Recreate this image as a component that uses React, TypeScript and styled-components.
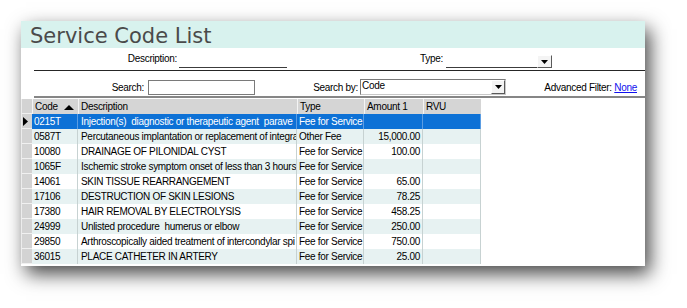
import React from 'react';
import styled, { createGlobalStyle } from 'styled-components';

const GlobalStyle = createGlobalStyle`
  html, body { margin: 0; padding: 0; background: #ffffff; }
  body { font-family: "Liberation Sans", Arial, sans-serif; }
`;

const Page = styled.div`
  width: 687px;
  height: 308px;
  box-sizing: border-box;
  padding: 21px 0 0 21px;
  overflow: hidden;
`;

const Window = styled.div`
  width: 624px;
  height: 245px;
  background: #ffffff;
  overflow: hidden;
  display: flex;
  flex-direction: column;
  box-shadow: 5px 8px 18px rgba(0, 0, 0, 0.72);
`;

const TitleBar = styled.div`
  height: 27px;
  box-sizing: border-box;
  padding: 4px 0 0 9px;
  background: #d8f2ee;
  font-family: "DejaVu Sans", Verdana, sans-serif;
  font-size: 21px;
  line-height: 23px;
  color: #4a4a4a;
`;

const FilterRow = styled.div<{ $top: number; $height: number }>`
  display: flex;
  align-items: flex-end;
  height: ${(p) => p.$height}px;
  margin-top: ${(p) => p.$top}px;
  font-size: 10px;
  letter-spacing: -0.3px;
  color: #000;
`;

const Label = styled.div<{ $width: number }>`
  width: ${(p) => p.$width}px;
  flex: none;
  text-align: right;
  line-height: 13px;
  white-space: nowrap;
  align-self: center;
`;

const LineField = styled.div<{ $width: number; $gap: number }>`
  width: ${(p) => p.$width}px;
  margin-left: ${(p) => p.$gap}px;
  height: 13px;
  box-sizing: border-box;
  border-bottom: 1px solid #3c3c3c;
  flex: none;
`;

const DropButton = styled.div`
  width: 15px;
  height: 13px;
  box-sizing: border-box;
  flex: none;
  background: #f4f4f4;
  border: 1px solid;
  border-color: #ffffff #5a5a5a #5a5a5a #ffffff;
  display: flex;
  align-items: center;
  justify-content: center;
`;

const TextInput = styled.div<{ $width: number; $gap: number }>`
  width: ${(p) => p.$width}px;
  margin-left: ${(p) => p.$gap}px;
  height: 15px;
  box-sizing: border-box;
  border: 1px solid #7a7a7a;
  background: #fff;
  flex: none;
`;

const Combo = styled.div<{ $width: number; $gap: number }>`
  width: ${(p) => p.$width}px;
  margin-left: ${(p) => p.$gap}px;
  height: 16px;
  box-sizing: border-box;
  border: 1px solid #7a7a7a;
  border-right-color: #c8c8c8;
  border-bottom-color: #c8c8c8;
  background: #fff;
  flex: none;
  display: flex;
  align-items: stretch;
`;

const ComboText = styled.div`
  flex: 1;
  padding-left: 1px;
  line-height: 12px;
`;

const ComboButton = styled(DropButton)`
  height: auto;
  width: 14px;
`;

const Spacer = styled.div`
  flex: 1;
`;

const FilterLink = styled.div`
  margin-right: 8px;
  align-self: center;
  line-height: 13px;
  white-space: nowrap;
  a {
    color: #1010ee;
    text-decoration: underline;
  }
`;

const Rule = styled.div<{ $top: number; $size: number; $color: string }>`
  margin: ${(p) => p.$top}px 0 0 13px;
  height: ${(p) => p.$size}px;
  background: ${(p) => p.$color};
  flex: none;
`;

const COLS = '11px 46px 219px 67px 59px 58px';

const Grid = styled.div`
  margin-top: 1px;
  width: 460px;
  font-size: 10px;
  letter-spacing: -0.3px;
  display: flex;
  flex-direction: column;
`;

const HeaderRow = styled.div`
  display: grid;
  grid-template-columns: ${COLS};
  height: 15px;
  background: #d5d5d5;
`;

const HeaderCell = styled.div`
  box-sizing: border-box;
  padding: 1px 0 0 2px;
  line-height: 14px;
  border-left: 1px solid #f4f4f4;
  white-space: nowrap;
  color: #000;
  display: flex;
  align-items: center;
  gap: 6px;
`;

const DataRow = styled.div<{ $alt: boolean; $selected: boolean }>`
  display: grid;
  grid-template-columns: ${COLS};
  height: 15px;
  background: ${(p) => (p.$selected ? '#0d71d6' : p.$alt ? '#e7f2f2' : '#ffffff')};
  color: ${(p) => (p.$selected ? '#ffffff' : '#000000')};
`;

const Selector = styled.div`
  background: #d3d3d3;
  box-sizing: border-box;
  border-bottom: 1px solid #f0f0f0;
  border-left: 1px solid #ececec;
  display: flex;
  align-items: center;
  padding-left: 1px;
`;

const Cell = styled.div<{ $right?: boolean; $selected: boolean }>`
  box-sizing: border-box;
  padding: 1px 2px 0 2px;
  line-height: 14px;
  white-space: pre;
  overflow: hidden;
  text-align: ${(p) => (p.$right ? 'right' : 'left')};
  border-right: 1px solid ${(p) => (p.$selected ? '#5b9de3' : '#c7d2d2')};
`;

const DescCell = styled(Cell)`
  padding-left: 3px;
`;

const Arrow = ({ dir }: { dir: 'down' | 'up' | 'right' }) => {
  if (dir === 'down')
    return (
      <svg width="7" height="4" viewBox="0 0 7 4">
        <path d="M0 0H7L3.5 4Z" fill="#000" />
      </svg>
    );
  if (dir === 'up')
    return (
      <svg width="10" height="5" viewBox="0 0 10 5">
        <path d="M0 5H10L5 0Z" fill="#000" />
      </svg>
    );
  return (
    <svg width="5" height="9" viewBox="0 0 5 9">
      <path d="M0 0V9L5 4.5Z" fill="#000" />
    </svg>
  );
};

type Row = { code: string; desc: string; type: string; amount: string };

const rows: Row[] = [
  { code: '0215T', desc: 'Injection(s)  diagnostic or therapeutic agent  parave', type: 'Fee for Service', amount: '' },
  { code: '0587T', desc: 'Percutaneous implantation or replacement of integra', type: 'Other Fee', amount: '15,000.00' },
  { code: '10080', desc: 'DRAINAGE OF PILONIDAL CYST', type: 'Fee for Service', amount: '100.00' },
  { code: '1065F', desc: 'Ischemic stroke symptom onset of less than 3 hours', type: 'Fee for Service', amount: '' },
  { code: '14061', desc: 'SKIN TISSUE REARRANGEMENT', type: 'Fee for Service', amount: '65.00' },
  { code: '17106', desc: 'DESTRUCTION OF SKIN LESIONS', type: 'Fee for Service', amount: '78.25' },
  { code: '17380', desc: 'HAIR REMOVAL BY ELECTROLYSIS', type: 'Fee for Service', amount: '458.25' },
  { code: '24999', desc: 'Unlisted procedure  humerus or elbow', type: 'Fee for Service', amount: '250.00' },
  { code: '29850', desc: 'Arthroscopically aided treatment of intercondylar spi', type: 'Fee for Service', amount: '750.00' },
  { code: '36015', desc: 'PLACE CATHETER IN ARTERY', type: 'Fee for Service', amount: '25.00' },
];

export default function App() {
  return (
    <Page>
      <GlobalStyle />
      <Window>
        <TitleBar>Service Code List</TitleBar>

        <FilterRow $top={0} $height={20}>
          <Label $width={156}>Description:</Label>
          <LineField $width={108} $gap={2} />
          <Label $width={156}>Type:</Label>
          <LineField $width={91} $gap={3} />
          <DropButton>
            <Arrow dir="down" />
          </DropButton>
        </FilterRow>
        <Rule $top={2} $size={1} $color="#262626" />

        <FilterRow $top={8} $height={16}>
          <Label $width={123}>Search:</Label>
          <TextInput $width={107} $gap={4} />
          <Label $width={103}>Search by:</Label>
          <Combo $width={146} $gap={2}>
            <ComboText>Code</ComboText>
            <ComboButton>
              <Arrow dir="down" />
            </ComboButton>
          </Combo>
          <Spacer />
          <FilterLink>
            Advanced Filter: <a>None</a>
          </FilterLink>
        </FilterRow>
        <Rule $top={1} $size={2} $color="#868686" />

        <Grid>
          <HeaderRow>
            <Selector />
            <HeaderCell>
              Code <Arrow dir="up" />
            </HeaderCell>
            <HeaderCell>Description</HeaderCell>
            <HeaderCell>Type</HeaderCell>
            <HeaderCell>Amount 1</HeaderCell>
            <HeaderCell>RVU</HeaderCell>
          </HeaderRow>
          {rows.map((r, i) => {
            const sel = i === 0;
            return (
              <DataRow key={r.code} $alt={i % 2 === 1} $selected={sel}>
                <Selector>{sel && <Arrow dir="right" />}</Selector>
                <Cell $selected={sel}>{r.code}</Cell>
                <DescCell $selected={sel}>{r.desc}</DescCell>
                <Cell $selected={sel}>{r.type}</Cell>
                <Cell $selected={sel} $right>
                  {r.amount}
                </Cell>
                <Cell $selected={sel} />
              </DataRow>
            );
          })}
        </Grid>
      </Window>
    </Page>
  );
}
